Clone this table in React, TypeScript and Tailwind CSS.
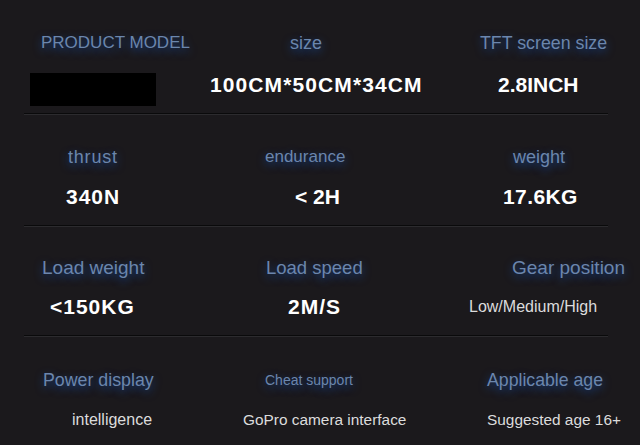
import React from "react";

interface Spec {
  label: string;
  labelClass: string;
  value?: string;
  valueClass: string;
  redacted?: boolean;
}

interface Row {
  rowClass: string;
  gapClass: string;
  cells: Spec[];
}

const labelBase =
  "block h-[24px] leading-[24px] whitespace-nowrap text-[#6b86ad] [text-shadow:0_3px_8px_rgba(24,84,180,0.75)]";
const boldValue = "block h-[24px] leading-[24px] whitespace-nowrap text-[21px] font-bold text-white";
const lightValue = "block h-[24px] leading-[24px] whitespace-nowrap text-[#dcdcdc]";

const rows: Row[] = [
  {
    rowClass: "h-[113px] pt-[31px]",
    gapClass: "gap-[18px]",
    cells: [
      { label: "PRODUCT MODEL", labelClass: "pl-[41px] text-[17px]", valueClass: "pl-[30px]", redacted: true },
      { label: "size", labelClass: "pl-[90px] text-[18px]", value: "100CM*50CM*34CM", valueClass: "pl-[10px] tracking-[1.1px]" },
      { label: "TFT screen size", labelClass: "pl-[40px] text-[17.8px]", value: "2.8INCH", valueClass: "pl-[58px]" },
    ],
  },
  {
    rowClass: "h-[110px] pt-[30px]",
    gapClass: "gap-[16px]",
    cells: [
      { label: "thrust", labelClass: "pl-[68px] text-[18px] tracking-[0.8px]", value: "340N", valueClass: "pl-[66px] tracking-[1px]" },
      { label: "endurance", labelClass: "pl-[65px] text-[17px]", value: "< 2H", valueClass: "pl-[95px]" },
      { label: "weight", labelClass: "pl-[73px] text-[18px]", value: "17.6KG", valueClass: "pl-[63px] tracking-[0.4px]" },
    ],
  },
  {
    rowClass: "h-[108px] pt-[29px]",
    gapClass: "gap-[15px]",
    cells: [
      { label: "Load weight", labelClass: "pl-[42px] text-[19px]", value: "<150KG", valueClass: "pl-[50px] tracking-[1px]" },
      { label: "Load speed", labelClass: "pl-[66px] text-[18.5px]", value: "2M/S", valueClass: "pl-[88px] tracking-[1px]" },
      { label: "Gear position", labelClass: "pl-[72px] text-[19px]", value: "Low/Medium/High", valueClass: "pl-[29px] text-[16px] text-[#cfcfcf]" },
    ],
  },
  {
    rowClass: "h-[108px] pt-[31px]",
    gapClass: "gap-[16px]",
    cells: [
      { label: "Power display", labelClass: "pl-[43px] text-[17.8px]", value: "intelligence", valueClass: "pl-[72px] text-[16px]" },
      { label: "Cheat support", labelClass: "pl-[65px] text-[14px]", value: "GoPro camera interface", valueClass: "pl-[43px] text-[15.4px]" },
      { label: "Applicable age", labelClass: "pl-[47px] text-[17.7px]", value: "Suggested age 16+", valueClass: "pl-[47px] text-[15.4px]" },
    ],
  },
];

function Separator() {
  return <div className="ml-[24px] h-[2px] w-[584px] border-t border-b border-t-[#0a0a0b] border-b-[#2c2b2e]" />;
}

export default function App() {
  return (
    <div className="h-[445px] w-[640px] overflow-hidden bg-[#1b191c] font-['Liberation_Sans',Arial,sans-serif]">
      {rows.map((row, i) => (
        <div key={i}>
          <div className={`grid grid-cols-[200px_240px_200px] ${row.rowClass}`}>
            {row.cells.map((cell) => (
              <div key={cell.label} className={`flex flex-col ${row.gapClass}`}>
                <span className={`${labelBase} ${cell.labelClass}`}>{cell.label}</span>
                {cell.redacted ? (
                  <div className={cell.valueClass}>
                    <div className="h-[33px] w-[126px] bg-black" />
                  </div>
                ) : (
                  <span className={`${cell.valueClass.includes("text-[1") ? lightValue : boldValue} ${cell.valueClass}`}>
                    {cell.value}
                  </span>
                )}
              </div>
            ))}
          </div>
          {i < rows.length - 1 && <Separator />}
        </div>
      ))}
    </div>
  );
}
